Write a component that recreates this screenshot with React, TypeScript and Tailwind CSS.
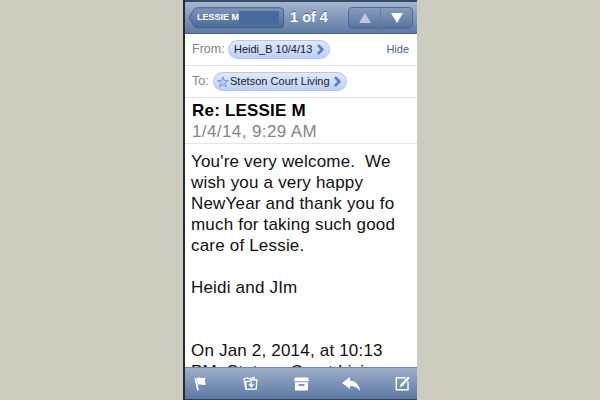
import React from 'react';
import { ChevronRight } from 'lucide-react';

const bodyLines = [
  "You're very welcome.\u00a0 We",
  'wish you a very happy',
  'NewYear and thank you fo',
  'much for taking such good',
  'care of Lessie.',
  '',
  'Heidi and JIm',
  '',
  '',
  'On Jan 2, 2014, at 10:13',
  'PM, Stetson Court Living',
];

const StarIcon = () => (
  <svg className="mr-px h-3 w-3 shrink-0" viewBox="0 0 12 12" fill="#b9cff5" stroke="#6489cf" strokeWidth="0.8">
    <path d="M6 0.8 7.3 4.4 11.3 4.5 8.2 6.9 9.3 10.8 6 8.5 2.7 10.8 3.8 6.9 0.7 4.5 4.7 4.4Z" />
  </svg>
);

const Pill = ({ className, children }: { className: string; children: React.ReactNode }) => (
  <div
    className={`flex h-[19px] items-center rounded-full border border-[#b3c6ee] bg-gradient-to-b from-[#e0e9fc] to-[#bfd0f7] text-[11px] whitespace-nowrap text-[#151b2c] ${className}`}
  >
    {children}
    <ChevronRight className="-mr-[4px] ml-auto h-[15px] w-[15px] shrink-0 text-[#4f7fcb]" strokeWidth={4} />
  </div>
);

const Header = () => (
  <header className="flex h-[34px] shrink-0 items-center border-t-2 border-b border-t-[#354b6c] border-b-[#4a6287] bg-gradient-to-b from-[#a5b5cd] to-[#5f7ba4]">
    {/* Back button */}
    <div className="relative ml-[3px] flex h-[22px] w-[97px] shrink-0 items-center">
      <svg className="absolute inset-0" width="97" height="22" viewBox="0 0 97 22">
        <defs>
          <linearGradient id="back" x1="0" y1="0" x2="0" y2="1">
            <stop offset="0" stopColor="#8096b9" />
            <stop offset="1" stopColor="#486896" />
          </linearGradient>
        </defs>
        <path
          d="M9 0.8H92Q95.5 0.8 95.5 4V17.5Q95.5 20.8 92 20.8H9Q7 20.8 5.8 18.7L0.8 10.8 5.8 2.8Q7 0.8 9 0.8Z"
          fill="url(#back)"
          stroke="#45618c"
        />
      </svg>
      <span className="relative ml-[9px] text-[9px] font-bold whitespace-nowrap text-white">LESSIE M</span>
      <span className="relative h-[13px] flex-1 bg-[#48699b]" />
      <span className="w-[6px]" />
    </div>

    <div className="ml-[4px] w-[40px] shrink-0 text-center text-[14.5px] font-bold whitespace-nowrap text-white [text-shadow:0_-1px_0_#4b6287]">
      1 of 4
    </div>

    {/* Previous / next */}
    <div className="mr-[4px] ml-auto flex h-[22px] w-[65px] rounded-[4px] border border-[#516b94] bg-gradient-to-b from-[#899dbd] to-[#5673a0]">
      <div className="flex flex-1 items-center justify-center border-r border-[#607aa1]">
        <svg width="12" height="10" viewBox="0 0 12 10"><path d="M6 0 12 10H0Z" fill="#bdc8da" /></svg>
      </div>
      <div className="flex flex-1 items-center justify-center">
        <svg width="12" height="10" viewBox="0 0 12 10"><path d="M0 0H12L6 10Z" fill="#fff" /></svg>
      </div>
    </div>
  </header>
);

const Toolbar = () => (
  <footer className="flex h-[33px] shrink-0 items-center border-t border-b border-t-[#7186a8] border-b-[#2f4058] bg-gradient-to-b from-[#9dafca] to-[#5c78a3]">
    <svg className="ml-[9px]" width="13" height="16" viewBox="0 0 13 16" fill="#fff">
      <path d="M0.5 2.5 2 1.5 4.8 14 3.2 14.8Z" />
      <path d="M2.5 2.2Q5 0.8 7 1.8T11.5 1.2L10.8 5 11.8 8.5Q9 9.6 7 8.6T4.2 9.2Z" />
    </svg>
    <svg className="ml-[36px]" width="16" height="15" viewBox="0 0 16 15" fill="none" stroke="#fff" strokeWidth="1.3">
      <path d="M3 13.3 1 3 4.8 1.7 6.3 3 11 1.3 11.8 4" />
      <path d="M3 13.3 2.8 5.7 7 5.2 8.3 4 13.8 3.7 13.2 13Z" />
      <path d="M8.3 6V10M6 8 8.3 10.8 10.7 8" />
    </svg>
    <svg className="ml-[35px]" width="15" height="14" viewBox="0 0 15 14">
      <path d="M1 0.5H14L15 4.2H0ZM1 5.2H14V13.5H1Z" fill="#fff" />
      <path d="M4.5 8H10.5" stroke="#6580a9" strokeWidth="1.6" />
    </svg>
    <svg className="ml-[33px]" width="19" height="14" viewBox="0 0 19 14" fill="#fff">
      <path d="M0 6 8 0V3.4Q17 4 18 14 14.5 9 8 9V12Z" />
    </svg>
    <svg className="ml-[34px]" width="16" height="15" viewBox="0 0 16 15" fill="none" stroke="#fff" strokeWidth="1.4">
      <path d="M10.5 1.7H1.3V13.7H13V5.5" />
      <path d="M5 11 6 8.2 13 0.8 14.6 2 7.7 9.7Z" fill="#fff" strokeWidth="0.4" />
    </svg>
  </footer>
);

export default function App() {
  return (
    <div className="flex h-[400px] w-[600px] justify-center overflow-hidden bg-[#cccdbf] font-['Liberation_Sans',Arial,sans-serif]">
      <main className="flex h-full w-[234px] flex-col overflow-hidden border-l-2 border-[#252a33] bg-white">
        <Header />

        <div className="flex h-8 shrink-0 items-center border-b border-[#e5e5e8] pr-2 pl-[7px]">
          <span className="w-9 text-[12.5px] text-[#858585]">From:</span>
          <Pill className="w-[102px] px-[5px]">Heidi_B 10/4/13</Pill>
          <span className="ml-auto text-[11px] text-[#436591]">Hide</span>
        </div>

        <div className="flex h-8 shrink-0 items-center border-b border-[#e5e5e8] pl-[7px]">
          <span className="w-[21px] text-[12.5px] text-[#858585]">To:</span>
          <Pill className="w-[134px] pr-[5px] pl-[3px]">
            <StarIcon />
            <span className="tracking-[0.03px]">Stetson Court Living</span>
          </Pill>
        </div>

        <div className="h-[46px] shrink-0 border-b border-[#e5e5e8] pt-[2px] pl-[7px]">
          <h1 className="text-[17px] leading-[21px] font-bold tracking-[0.2px] text-black">Re: LESSIE M</h1>
          <p className="text-[17px] leading-[21px] tracking-[0.4px] text-[#858585]">1/4/14, 9:29 AM</p>
        </div>

        <div className="min-h-0 flex-1 overflow-hidden pt-[7px] pl-[6px] text-[17px] leading-[21px] tracking-[0.19px] whitespace-nowrap text-[#111]">
          {bodyLines.map((line, i) => (
            <p key={i} className="h-[21px]">{line}</p>
          ))}
        </div>

        <Toolbar />
      </main>
    </div>
  );
}
